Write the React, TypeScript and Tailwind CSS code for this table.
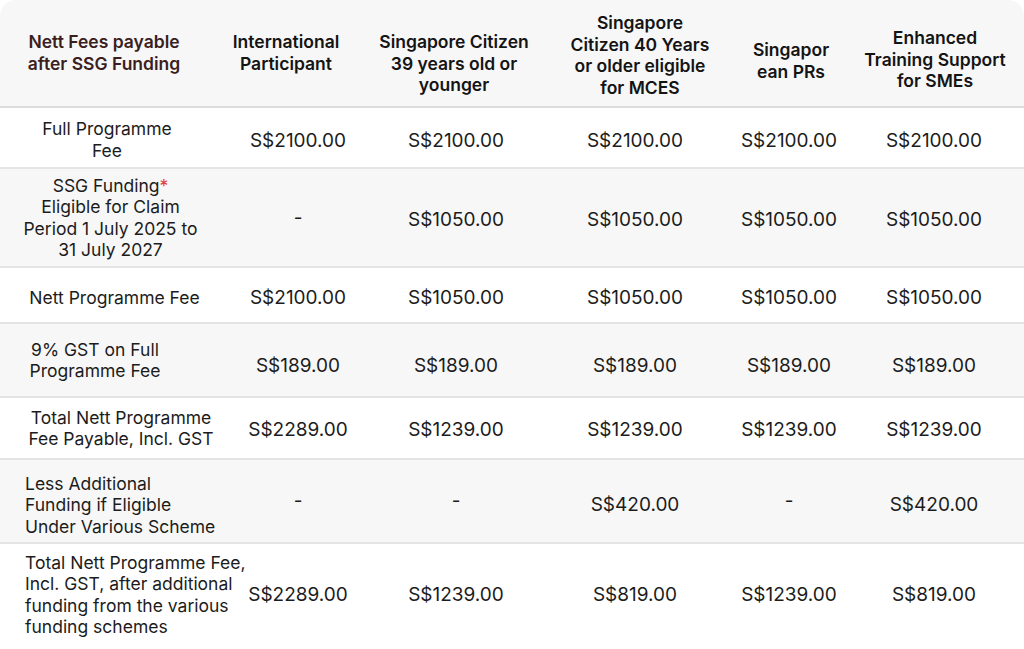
import React from "react";

type Row = {
  h: string;
  bg: string;
  label: React.ReactNode;
  labelMode: "center" | "left";
  labelW?: string;
  labelPt: string;
  valuePt: string;
  values: string[];
};

const font = { fontFamily: "Inter, 'Noto Sans', sans-serif" };

const rows: Row[] = [
  {
    h: "h-[61px]",
    bg: "bg-white",
    label: (
      <>
        Full Programme
        <br />
        Fee
      </>
    ),
    labelMode: "center",
    labelW: "w-[214px]",
    labelPt: "pt-[4px]",
    valuePt: "pt-[6px]",
    values: ["S$2100.00", "S$2100.00", "S$2100.00", "S$2100.00", "S$2100.00"],
  },
  {
    h: "h-[99px]",
    bg: "bg-[#f7f7f7]",
    label: (
      <>
        SSG Funding<span className="text-[#e53935]">*</span>
        <br />
        Eligible for Claim
        <br />
        Period 1 July 2025 to
        <br />
        31 July 2027
      </>
    ),
    labelMode: "center",
    labelW: "w-[221px]",
    labelPt: "pt-0",
    valuePt: "pt-[4px]",
    values: ["-", "S$1050.00", "S$1050.00", "S$1050.00", "S$1050.00"],
  },
  {
    h: "h-[56px]",
    bg: "bg-white",
    label: <>Nett Programme Fee</>,
    labelMode: "center",
    labelW: "w-[229px]",
    labelPt: "pt-[6px]",
    valuePt: "pt-[6px]",
    values: ["S$2100.00", "S$1050.00", "S$1050.00", "S$1050.00", "S$1050.00"],
  },
  {
    h: "h-[74px]",
    bg: "bg-[#f7f7f7]",
    label: (
      <>
        9% GST on Full
        <br />
        Programme Fee
      </>
    ),
    labelMode: "center",
    labelW: "w-[190px]",
    labelPt: "pt-0",
    valuePt: "pt-[12px]",
    values: ["S$189.00", "S$189.00", "S$189.00", "S$189.00", "S$189.00"],
  },
  {
    h: "h-[62px]",
    bg: "bg-white",
    label: (
      <>
        Total Nett Programme
        <br />
        Fee Payable, Incl. GST
      </>
    ),
    labelMode: "center",
    labelW: "w-[242px]",
    labelPt: "pt-0",
    valuePt: "pt-[4px]",
    values: ["S$2289.00", "S$1239.00", "S$1239.00", "S$1239.00", "S$1239.00"],
  },
  {
    h: "h-[84px]",
    bg: "bg-[#f7f7f7]",
    label: (
      <>
        Less Additional
        <br />
        Funding if Eligible
        <br />
        Under Various Scheme
      </>
    ),
    labelMode: "left",
    labelPt: "pt-[8px]",
    valuePt: "pt-[8px]",
    values: ["-", "-", "S$420.00", "-", "S$420.00"],
  },
  {
    h: "h-[101px]",
    bg: "bg-white",
    label: (
      <>
        Total Nett Programme Fee,
        <br />
        Incl. GST, after additional
        <br />
        funding from the various
        <br />
        funding schemes
      </>
    ),
    labelMode: "left",
    labelPt: "pt-0",
    valuePt: "pt-0",
    values: ["S$2289.00", "S$1239.00", "S$819.00", "S$1239.00", "S$819.00"],
  },
];

const headers: { pt: string; node: React.ReactNode; color: string }[] = [
  {
    pt: "pt-[31px]",
    color: "text-[#3b1e1e]",
    node: (
      <>
        Nett Fees payable
        <br />
        after SSG Funding
      </>
    ),
  },
  {
    pt: "pt-[31px]",
    color: "text-[#141414]",
    node: (
      <>
        International
        <br />
        Participant
      </>
    ),
  },
  {
    pt: "pt-[31px]",
    color: "text-[#141414]",
    node: (
      <>
        Singapore Citizen
        <br />
        39 years old or
        <br />
        younger
      </>
    ),
  },
  {
    pt: "pt-[12px]",
    color: "text-[#141414]",
    node: (
      <>
        Singapore
        <br />
        Citizen 40 Years
        <br />
        or older eligible
        <br />
        for MCES
      </>
    ),
  },
  {
    pt: "pt-[39px]",
    color: "text-[#141414]",
    node: (
      <>
        Singapor
        <br />
        ean PRs
      </>
    ),
  },
  {
    pt: "pt-[27px]",
    color: "text-[#141414]",
    node: (
      <>
        Enhanced
        <br />
        Training Support
        <br />
        for SMEs
      </>
    ),
  },
];

export default function App() {
  return (
    <div className="w-[1024px] h-[649px] bg-white overflow-hidden" style={font}>
      <div className="rounded-t-[16px] overflow-hidden">
        {/* Header */}
        <div className="grid grid-cols-[208px_156px_180px_192px_110px_178px] h-[108px] bg-[#f7f7f7] border-b-2 border-[#dcdcdc] text-[17.5px] leading-[21.5px] font-semibold">
          {headers.map((h, i) => (
            <div key={i} className={`flex justify-center text-center ${h.pt} ${h.color}`}>
              <div>{h.node}</div>
            </div>
          ))}
        </div>
        {/* Body */}
        {rows.map((r, ri) => (
          <div
            key={ri}
            className={`grid grid-cols-[248px_100px_216px_142px_166px_152px] ${r.h} ${r.bg} ${
              ri < rows.length - 1 ? "border-b-2 border-[#e4e4e4]" : ""
            } leading-[21.5px] text-[#1c1c1c]`}
          >
            <div className={`flex items-center text-[17.5px] ${r.labelPt}`}>
              {r.labelMode === "center" ? (
                <div className={`${r.labelW} text-center shrink-0`}>{r.label}</div>
              ) : (
                <div className="pl-[25px] text-left whitespace-nowrap">{r.label}</div>
              )}
            </div>
            {r.values.map((v, vi) => (
              <div
                key={vi}
                className={`flex items-center justify-center whitespace-nowrap text-[19px] ${
                  v === "-" ? "" : r.valuePt
                } ${vi === 4 ? "pr-[28px]" : ""}`}
              >
                {v}
              </div>
            ))}
          </div>
        ))}
      </div>
    </div>
  );
}
